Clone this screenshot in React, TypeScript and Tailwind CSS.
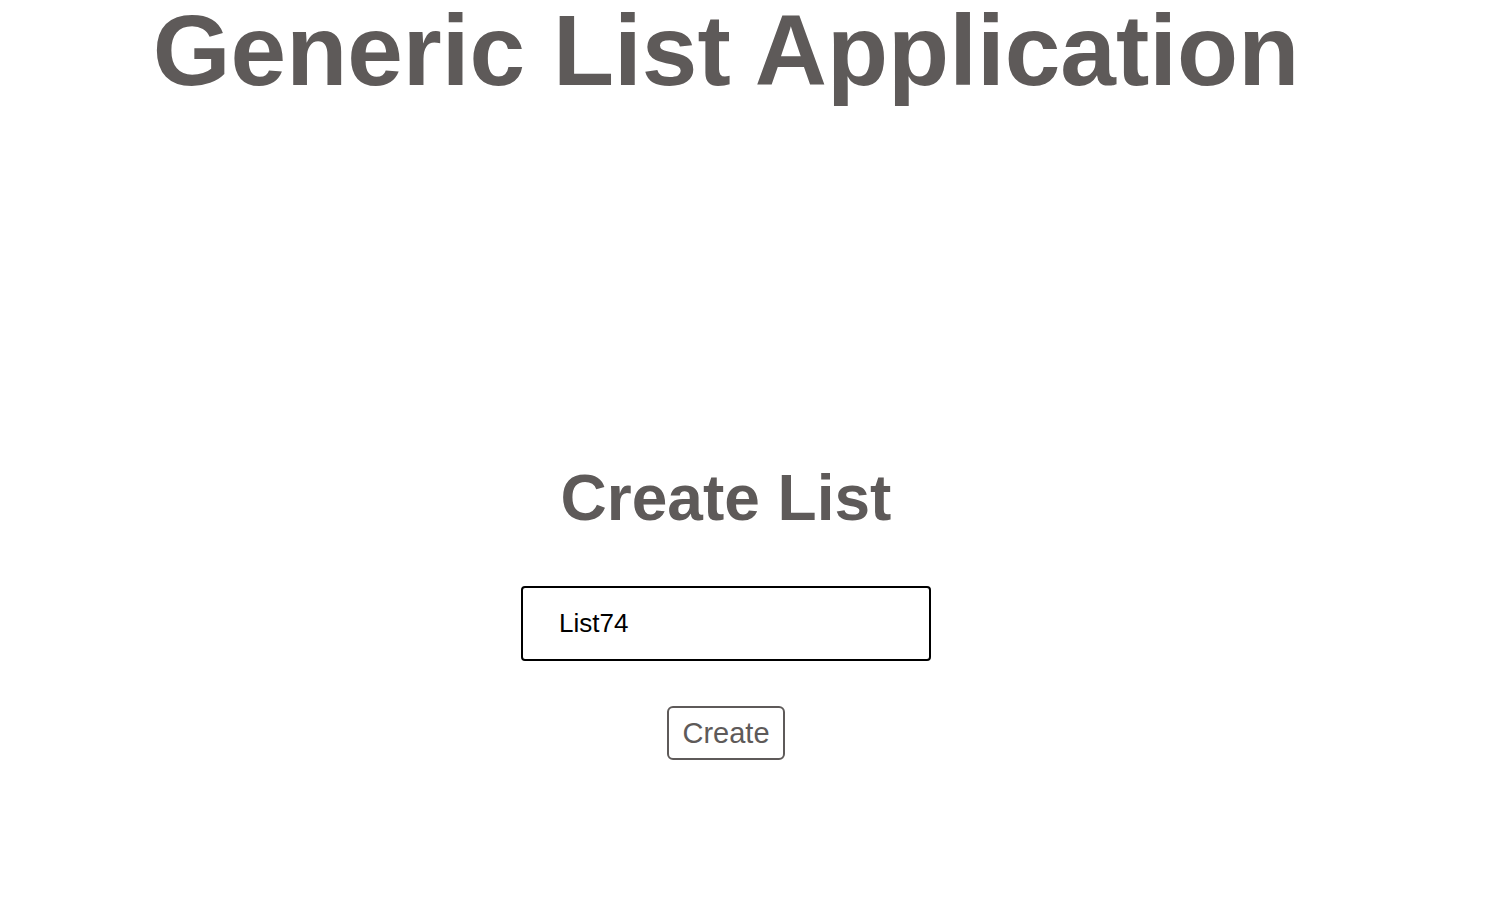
import React from "react";

export default function App() {
  return (
    <div className="w-[1452px] min-h-[900px] bg-white flex flex-col items-center text-[#5e5a59]" style={{ fontFamily: '"Liberation Sans", Arial, sans-serif' }}>
      <h1 className="text-[100px] font-bold leading-none m-0">Generic List Application</h1>
      <h2 className="mt-[366px] text-[64px] font-bold leading-none">Create List</h2>
      <input
        autoFocus
        defaultValue="List74"
        className="mt-[56px] w-[410px] h-[75px] border-2 border-black rounded-[4px] pl-[36px] text-[26px] text-black outline-none bg-white"
        style={{ fontFamily: '"Liberation Sans", Arial, sans-serif' }}
      />
      <button className="mt-[45px] h-[54px] px-[13px] border-2 border-[#5e5a59] rounded-[6px] text-[29px] leading-none text-[#5e5a59] bg-white">
        Create
      </button>
    </div>
  );
}
